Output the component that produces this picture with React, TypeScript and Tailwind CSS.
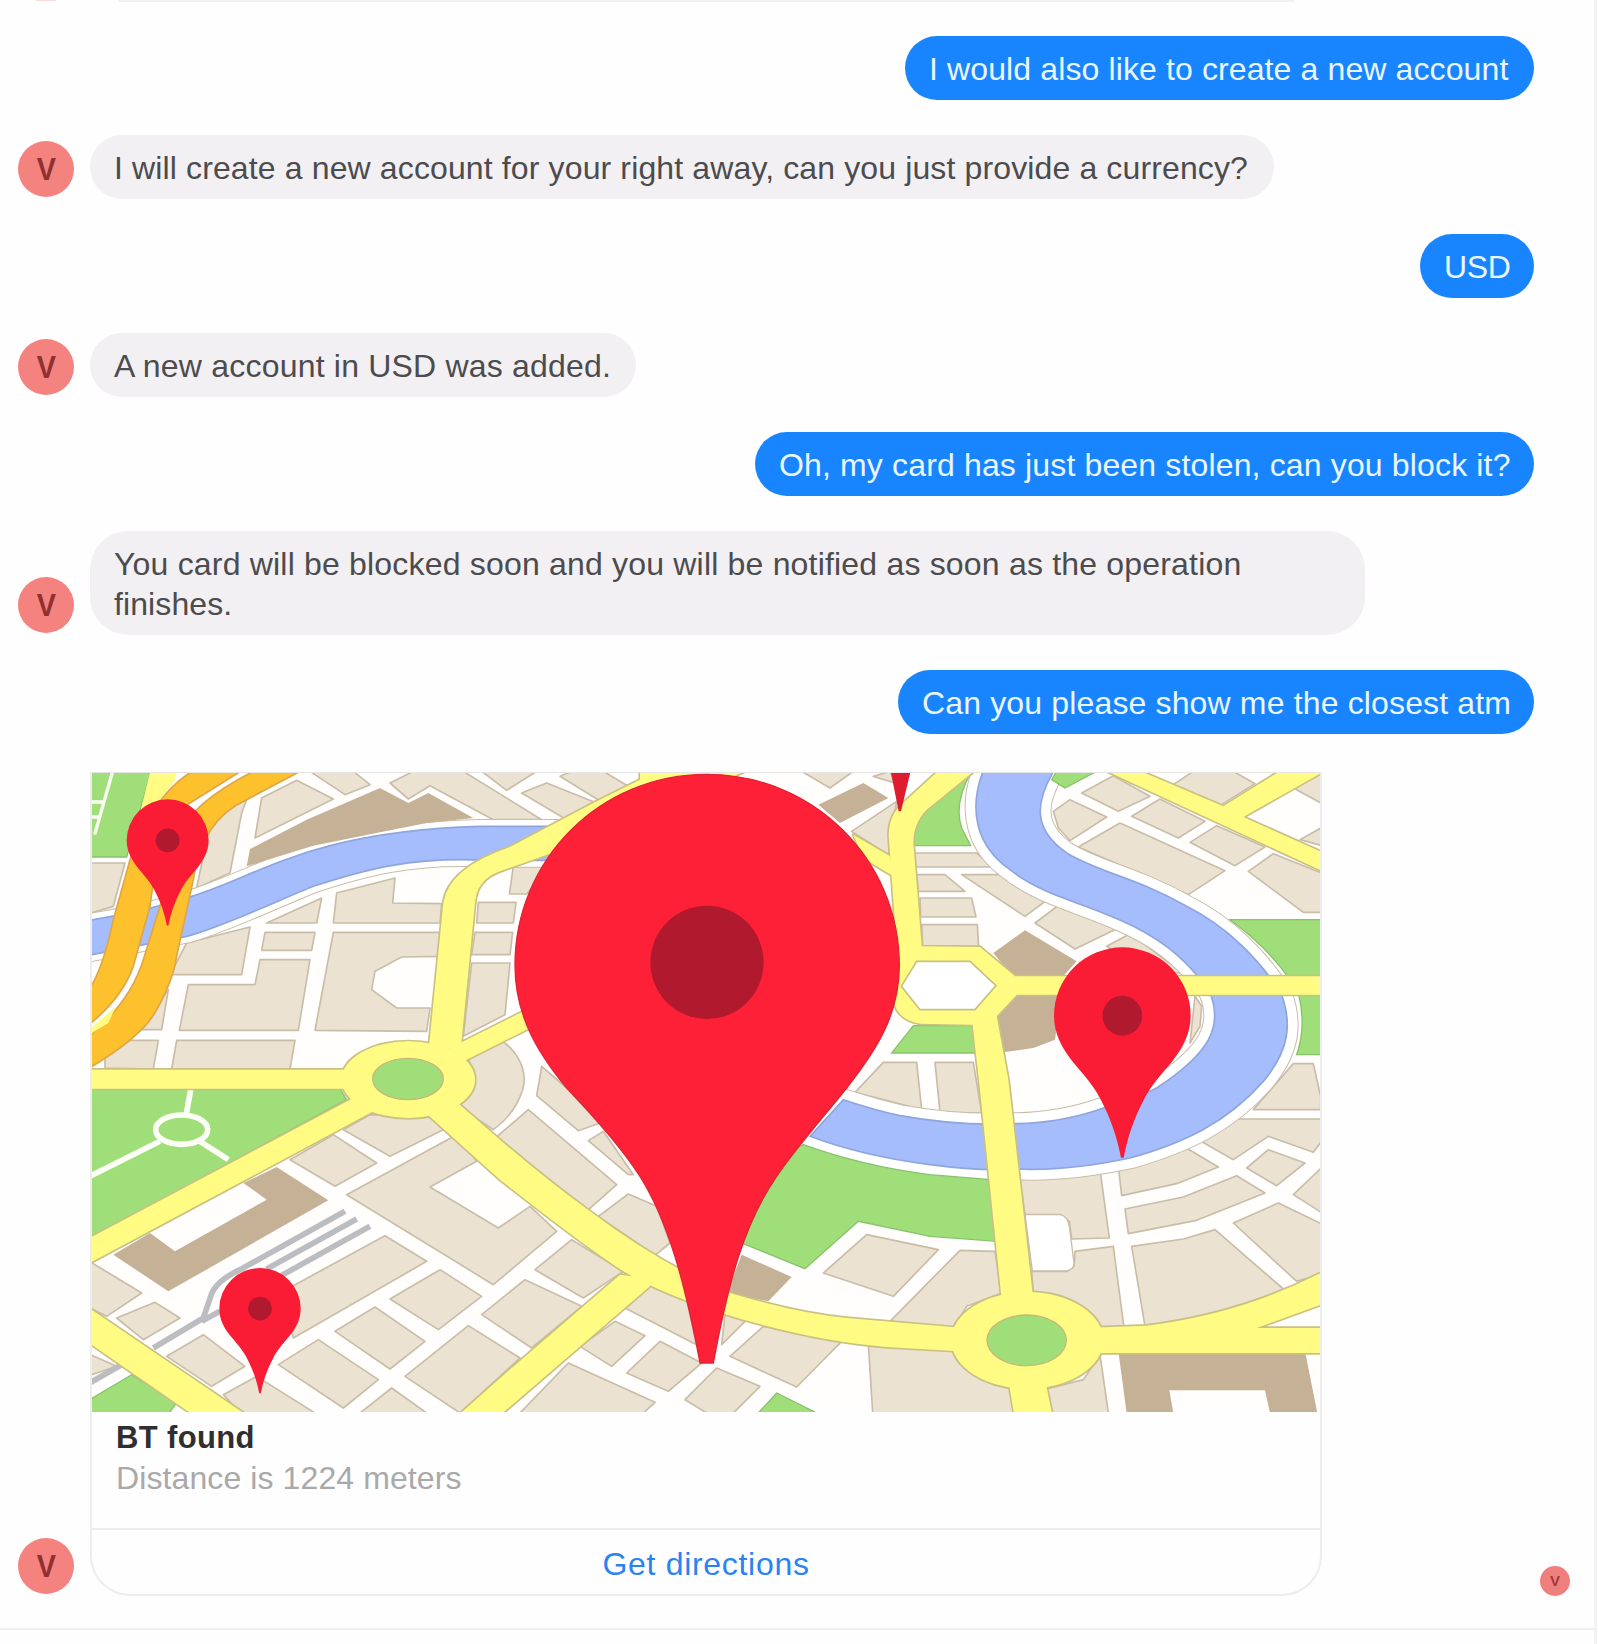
import type { ReactNode } from "react";

const BLOCK = "#ebe2d2";
const EDGE = "#c9bda9";
const TAN = "#c5b196";
const GREEN = "#9fde78";
const ROAD = "#fffb83";
const WATER = "#a5bcfd";
const ORANGE = "#fcc12c";

function Avatar({ small = false }: { small?: boolean }) {
  return small ? (
    <div className="flex h-[30px] w-[30px] shrink-0 items-center justify-center rounded-full bg-[#ef7f7c] text-[15px] font-bold text-[#a43a3c]">
      V
    </div>
  ) : (
    <div className="mb-0.5 flex h-14 w-14 shrink-0 items-center justify-center rounded-full bg-[#f4827f] text-[31px] font-bold leading-none text-[#8f3033]">
      <span className="scale-x-[0.93]">V</span>
    </div>
  );
}

function Incoming({ children, width, tall = false }: { children: ReactNode; width: string; tall?: boolean }) {
  return (
    <div className="flex items-end gap-4 pl-[18px]">
      <Avatar />
      <div
        className={
          "bg-[#f2f0f3] pl-6 text-[#4c4b4d] " +
          width +
          (tall ? " h-[104px] rounded-[38px] pt-[13px]" : " h-16 rounded-[32px] pt-[13px]")
        }
      >
        {children}
      </div>
    </div>
  );
}

function Outgoing({ children, width }: { children: ReactNode; width: string }) {
  return (
    <div className={"mr-[60px] h-16 self-end rounded-full bg-[#1885fe] pl-6 pt-[13px] text-[#e9f6ff] " + width}>
      {children}
    </div>
  );
}

function Line({ children, spacing }: { children: ReactNode; spacing: string }) {
  return <div className={"whitespace-nowrap text-[32px] leading-10 " + spacing}>{children}</div>;
}

type Frame = { x: number; y: number; items: string[] };

const blocks: Frame[] = [
  {
    x: 0,
    y: 0,
    items: [
      "33,310 135,310 100,440 33,460",
      "500,120 485,160 450,340 350,385 385,215 440,150",
      "545,115 650,62 760,118 525,235",
      "690,35 820,35 870,75 795,105",
      "930,70 1000,35 1150,35 1385,180 1240,180 1050,78 985,118",
      "320,550 510,502 485,645 270,645",
      "560,490 725,415 710,490",
      "770,400 945,355 938,430 1085,432 1080,490 760,490",
      "555,518 705,518 695,572 545,572",
      "760,518 1090,518 1080,590 965,592 885,635 875,690 950,745 1050,745 1040,815 705,812",
      "540,600 690,600 655,812 298,812 325,675 525,675",
      "265,690 245,810 175,810",
      "75,925 75,880 150,842 235,842 220,928",
      "290,842 645,842 630,928 275,928",
      "1185,518 1298,518 1290,585 1175,585",
      "1175,610 1290,610 1275,765 1150,830",
      "1195,428 1308,428 1300,490 1190,490",
    ],
  },
  {
    x: 1260,
    y: 0,
    items: [
      "65,100 140,70 290,130 200,180",
      "-55,35 110,35 20,92",
      "180,50 215,35 310,35 410,95 310,130",
      "40,320 150,320 80,403 28,403",
      "905,35 1060,35 990,85",
      "1120,50 1170,35 1185,70",
      "1055,215 1190,125 1165,285",
      "125,920 200,985 300,1090 235,1113 110,1008",
      "265,1143 310,1115 400,1245 385,1245",
      "1150,908 1250,908 1265,1050 1065,998",
    ],
  },
  {
    x: 2460,
    y: 0,
    items: [
      "45,280 230,280 280,322 45,322",
      "50,345 135,345 195,395 55,395",
      "60,415 215,415 228,472 62,472",
      "65,495 232,495 236,565 68,565",
      "185,345 320,345 445,418 375,470",
      "405,490 485,430 655,505 525,568",
      "620,560 690,522 850,640 750,640",
      "460,155 510,120 620,172 510,243 475,205",
      "545,100 640,48 750,110 655,155",
      "695,170 780,118 915,185 835,235",
      "535,262 660,190 975,333 865,405",
      "870,248 950,198 1095,262 1005,318",
      "820,75 880,35 1000,35 1065,72 960,138",
      "1045,335 1120,282 1290,350 1290,458 1210,458",
      "1200,240 1290,190 1290,265",
      "1180,85 1250,35 1290,35 1290,145",
      "105,908 220,908 245,1060 120,1058",
      "1180,912 1240,912 1262,1010 1262,1050 1060,1050",
      "885,710 905,740 900,800 870,850",
    ],
  },
  {
    x: 0,
    y: 960,
    items: [
      "790,150 870,105 1050,110 1090,150 930,230",
      "630,240 760,165 890,250 765,320",
      "800,345 1130,165 1190,245 1050,322 1255,445 1350,380 1430,455 1240,615",
      "20,540 185,640 80,710 20,680",
      "110,715 225,668 300,715 190,780",
      "600,640 915,468 1040,545 640,775",
      "930,658 1080,570 1205,650 1075,750",
      "765,755 885,682 1035,785 930,868",
      "595,855 715,780 895,900 790,985",
      "260,830 370,765 495,860 395,920",
      "430,945 530,890 705,1000 480,1000",
      "840,1000 935,925 1040,1000",
      "20,820 110,860 20,890",
      "975,890 1165,738 1320,835 1140,1000",
    ],
  },
  {
    x: 1260,
    y: 960,
    items: [
      "-20,180 85,90 350,315 262,393 120,290",
      "295,410 385,343 470,380 510,490 465,527",
      "105,570 215,480 370,575 250,655",
      "375,685 455,615 560,660 590,795",
      "-55,705 75,600 245,680 95,805",
      "240,800 345,725 435,768 335,860",
      "380,880 480,785 605,850 505,935",
      "555,960 650,865 780,920 700,1000 620,1000",
      "690,830 790,740 1025,785 890,922",
      "665,795 675,705 735,725",
      "60,1000 205,850 465,968 430,1000",
      "1100,465 1315,510 1180,650 970,580",
      "1380,512 1485,515 1505,640 1400,680 1360,745 1170,725",
      "1105,790 1365,810 1530,920 1545,1000 1118,1000",
    ],
  },
  {
    x: 2460,
    y: 960,
    items: [
      "1010,118 1290,118 1290,150 1240,218 1105,170 1000,240 895,180",
      "1105,210 1215,250 1130,318 1040,265",
      "655,260 850,200 955,262 830,312 665,348",
      "675,388 850,352 1010,288 1095,340 890,422 685,462",
      "1180,345 1290,240 1290,415",
      "1000,430 1135,370 1290,445 1290,575 1190,605",
      "695,500 850,478 945,450 1150,628 980,710 735,740",
      "360,300 600,270 628,475 515,478 508,425 480,405 375,405",
      "525,515 640,500 672,745 600,745 400,640 395,575 500,575 522,560",
      "430,930 550,900 600,825 625,1000 455,1000",
    ],
  },
];

const roads = [
  "M20,930H850V987H20Z",
  "M1045,880L1090,430Q1105,325 1290,262L1540,130L1680,60V20H2030L1500,250L1260,335Q1190,360 1185,430L1143,860Z",
  "M1100,870L1350,745V805L1130,915Z",
  "M830,1010L20,1440V1515L880,1055Z",
  "M1110,1010L1260,1140Q1400,1260 1530,1355Q1750,1520 1950,1600Q2150,1660 2300,1675L2660,1706V1776L2420,1762Q2200,1745 1940,1665Q1750,1605 1630,1535Q1500,1450 1260,1260L1010,1035Z",
  "M1620,1545L1700,1555L1715,1575L1245,1980H1120L1255,1860Z",
  "M20,1640L520,1980H360L20,1745Z",
  "M2320,225L2430,290L2440,350L2350,295Z",
  "M2590,20L2480,120Q2420,165 2427,240L2450,560L2440,720Q2450,780 2520,792L2678,795L2700,990L2765,1620H2860L2785,960L2750,770L2810,705H3750V650H2805L2700,562L2525,560L2500,250Q2500,190 2540,150L2700,20Z",
  "M3060,25L3160,25L3430,140L3630,15L3750,25L3490,172L3750,288V345Z",
  "M3010,1705L3200,1698Q3500,1660 3750,1525V1625L3530,1705H3750V1780H3010Z",
  "M2785,1860L2805,1980H2920L2895,1860Z",
];

const river =
  "M2715,20C2660,150 2690,260 2790,330C2890,410 3020,430 3160,500C3260,550 3330,610 3390,700C3430,800 3390,880 3230,985Q3150,1025 3070,1045Q2940,1092 2795,1092Q2640,1100 2460,1068Q2380,1050 2290,1020L2190,1130Q2350,1190 2550,1215Q2700,1235 2810,1228Q2960,1235 3150,1195C3310,1150 3440,1090 3550,965C3630,870 3635,790 3605,705C3540,600 3440,500 3320,440C3160,350 3060,340 2960,280C2860,210 2860,130 2930,20Z";
const westRiver =
  "M20,483Q200,455 350,405C550,340 700,215 1200,200H1500L1400,302H1220C1000,290 850,330 700,380C600,420 420,505 320,530L20,588Z";

function Shapes({ x, y, fill, items, stroke = "none" }: Frame & { fill: string; stroke?: string }) {
  return (
    <g transform={`translate(${x} ${y})`} fill={fill} stroke={stroke} strokeWidth="5" strokeLinejoin="round">
      {items.map((p) => (
        <polygon key={p} points={p} />
      ))}
    </g>
  );
}

function Pin({ x, y, r }: { x: number; y: number; r: number }) {
  return (
    <g transform={`translate(${x} ${y}) scale(${r})`}>
      <path
        d="M-1,0A1,1 0 0 1 1,0C1,.27 .88,.48 .72,.68C.54,.89 .42,1.03 .33,1.2C.17,1.5 .07,1.8 .02,2.08H-.02C-.07,1.8 -.17,1.5 -.33,1.2C-.42,1.03 -.54,.89 -.72,.68C-.88,.48 -1,.27 -1,0Z"
        fill="#f91c34"
      />
      <circle r=".29" fill="#b0192e" />
    </g>
  );
}

function CityMap() {
  return (
    <svg viewBox="36 40 3684 1917" preserveAspectRatio="none" className="block h-[639px] w-full">
      <rect x="0" y="0" width="3800" height="2000" fill="#fffefc" />
      {blocks.map((b) => (
        <Shapes key={`${b.x}-${b.y}`} {...b} fill={BLOCK} stroke={EDGE} />
      ))}
      <path
        d="M1160,890L1268,845C1310,875 1345,930 1328,990C1310,1045 1275,1085 1240,1110L1120,1030Q1200,950 1160,890Z"
        fill={BLOCK}
        stroke={EDGE}
        strokeWidth="5"
      />
      <g fill="none" strokeLinejoin="round">
        <path d={river} stroke={EDGE} strokeWidth="68" />
        <path d={river} stroke="#fff" strokeWidth="62" />
        <path d={westRiver} stroke={EDGE} strokeWidth="44" />
        <path d={westRiver} stroke="#fff" strokeWidth="38" />
      </g>
      <g fill={WATER} stroke="#8ea6dc" strokeWidth="5">
        <path d={river} />
        <path d={westRiver} />
      </g>
      <Shapes
        x={0}
        y={0}
        fill={TAN}
        items={[
          "500,320 510,268 680,180 900,85 985,130 1045,100 1180,175 1040,190 900,218 700,258",
          "2215,135 2350,70 2425,115 2280,190",
          "2740,580 2835,512 2990,605 2940,660 2805,660",
          "2810,700 2945,700 2925,840 2860,865 2770,878 2750,770",
          "490,1270 590,1222 745,1322 265,1595 100,1485 210,1420 285,1475 560,1320",
          "1985,1485 2135,1552 2065,1625 1940,1600",
          "3115,1775 3675,1775 3712,1960 3570,1960 3555,1892 3268,1892 3280,1960 3140,1960",
        ]}
      />
      <g fill={GREEN} stroke="#87c36c" strokeWidth="4">
        <path d="M20,30H215L140,292H20Z" />
        <path d="M2675,35Q2620,130 2645,205L2672,258H2495Q2505,190 2540,150Z" />
        <path d="M2915,60L2930,35H3050L2955,85Z" />
        <path d="M3450,480H3750V660H3630Q3560,560 3450,480Z" />
        <path d="M3655,700H3750V885H3650Q3680,800 3655,700Z" />
        <path d="M2500,798H2680L2690,880H2435Z" />
        <path d="M20,988H780L800,1020L20,1442Z" />
        <path d="M2170,1155Q2350,1220 2550,1245L2730,1260L2750,1445L2550,1430L2335,1385L2175,1527L1960,1440L2100,1190Z" />
        <path d="M20,1925L155,1845L290,1930L260,1970H20Z" />
        <path d="M2030,1965L2090,1900L2220,1965Z" />
      </g>
      <g fill="none" stroke="#fbfff5" strokeWidth="17">
        <ellipse cx="305" cy="1110" rx="78" ry="44" />
        <path d="M318,1068L332,990M240,1145L33,1248M360,1145L445,1200" />
        <path d="M98,35L44,225M33,127H72M33,172H60" strokeWidth="10" />
      </g>
      <g fill="none" stroke="#bcbdc0" strokeWidth="17">
        <path d="M795,1355L480,1530Q405,1565 392,1610L370,1675L220,1765M830,1378L560,1528M870,1400L600,1550M420,1655L365,1685M125,1815L20,1875" />
      </g>
      <g fill={ORANGE} stroke="#dda64a" strokeWidth="5">
        <path d="M345,30Q220,100 150,300L100,480Q70,620 33,680L20,800Q125,720 160,620L210,440Q240,190 330,130L490,30Z" />
        <path d="M530,30Q340,125 300,220L240,440L190,600Q150,730 20,835V930Q190,830 230,750Q280,660 290,590L340,360Q365,180 500,120L670,30Z" />
      </g>
      <path d="M212,30H292L285,60L210,160H180Z" fill={ROAD} />
      <path d="M33,805L108,740L85,790L33,822Z" fill={ROAD} />
      <g fill={ROAD} stroke="#c9c184" strokeWidth="10" strokeLinejoin="round">
        {roads.map((d) => (
          <path key={d} d={d} />
        ))}
        <ellipse cx="985" cy="960" rx="200" ry="115" />
        <ellipse cx="2842" cy="1742" rx="228" ry="145" />
      </g>
      <g fill={ROAD}>
        {roads.map((d) => (
          <path key={d} d={d} />
        ))}
        <ellipse cx="985" cy="960" rx="200" ry="115" />
        <ellipse cx="2842" cy="1742" rx="228" ry="145" />
      </g>
      <polygon
        points="2464,680 2510,605 2670,605 2748,678 2685,750 2520,750"
        fill="#fff"
        stroke="#c9c184"
        strokeWidth="5"
      />
      <g fill={GREEN} stroke="#c9b77a" strokeWidth="4">
        <ellipse cx="984" cy="958" rx="106" ry="62" />
        <ellipse cx="2840" cy="1742" rx="119" ry="76" />
      </g>
      <path
        d="M2835,1365H2940Q2962,1368 2968,1400L2982,1510Q2982,1534 2955,1534H2857Z"
        fill="#fff"
        stroke={EDGE}
        strokeWidth="4"
      />
      <polygon points="2431,30 2493,30 2463,155 2456,155" fill="#dd1c30" />
      <path
        d="M1305,617C1305,300 1560,44 1880,44C2200,44 2458,300 2458,617C2458,760 2395,865 2300,985C2220,1085 2140,1175 2090,1250C1990,1395 1945,1570 1900,1810H1860C1815,1570 1765,1385 1680,1250C1635,1180 1560,1090 1460,985C1365,870 1305,760 1305,617Z"
        fill="#fe2036"
        stroke="#df2535"
        strokeWidth="4"
      />
      <circle cx="1881" cy="608" r="170" fill="#b1192e" />
      <Pin x={263} y={242} r={123} />
      <Pin x={540} y={1647} r={122} />
      <Pin x={3127} y={768} r={205} />
    </svg>
  );
}

export default function App() {
  return (
    <div className="flex h-[1644px] w-[1598px] overflow-hidden bg-[#fefefe] font-['Liberation_Sans',Arial,sans-serif]">
      <main className="flex w-[1594px] flex-col">
        <div className="flex h-9 items-start">
          <div className="ml-9 h-px w-5 bg-[#fbdcdc]" />
          <div className="ml-[62px] h-[2px] w-[1176px] bg-[#f1f0f2]" />
        </div>
        <div className="flex flex-col gap-[35px]">
          <Outgoing width="w-[629px]">
            <Line spacing="tracking-[0.12px]">I would also like to create a new account</Line>
          </Outgoing>
          <Incoming width="w-[1184px]">
            <Line spacing="tracking-[0.13px]">
              I will create a new account for your right away, can you just provide a currency?
            </Line>
          </Incoming>
          <Outgoing width="w-[114px]">
            <Line spacing="tracking-[-0.3px]">USD</Line>
          </Outgoing>
          <Incoming width="w-[546px]">
            <Line spacing="tracking-[0.2px]">A new account in USD was added.</Line>
          </Incoming>
          <Outgoing width="w-[779px]">
            <Line spacing="tracking-[0.15px]">Oh, my card has just been stolen, can you block it?</Line>
          </Outgoing>
          <Incoming width="w-[1275px]" tall>
            <Line spacing="tracking-[0.19px]">
              You card will be blocked soon and you will be notified as soon as the operation
            </Line>
            <Line spacing="tracking-[0.1px]">finishes.</Line>
          </Incoming>
          <Outgoing width="w-[636px]">
            <Line spacing="tracking-[0.15px]">Can you please show me the closest atm</Line>
          </Outgoing>
        </div>
        <div className="mt-[38px] flex items-end gap-4 pl-[18px]">
          <Avatar />
          <section className="h-[824px] w-[1232px] overflow-hidden rounded-b-[40px] border-2 border-t border-[#ededed] border-t-[#e5e5e5]">
            <CityMap />
            <div className="h-[118px] border-b-2 border-[#ededed] pl-6 pt-1.5">
              <div className="text-[31px] font-bold leading-10 tracking-[0.35px] text-[#2f2f2f]">BT found</div>
              <Line spacing="text-[#a9a9a9] tracking-[0.1px]">Distance is 1224 meters</Line>
            </div>
            <button className="flex h-16 w-full items-center justify-center pt-1 text-[#2b83f2]">
              <Line spacing="tracking-[0.7px]">Get directions</Line>
            </button>
          </section>
          <div className="ml-[202px]">
            <Avatar small />
          </div>
        </div>
        <div className="mt-8 h-[2px] bg-[#efefef]" />
      </main>
      <div className="h-full w-[3px] bg-[#f3f3f3]" />
    </div>
  );
}
